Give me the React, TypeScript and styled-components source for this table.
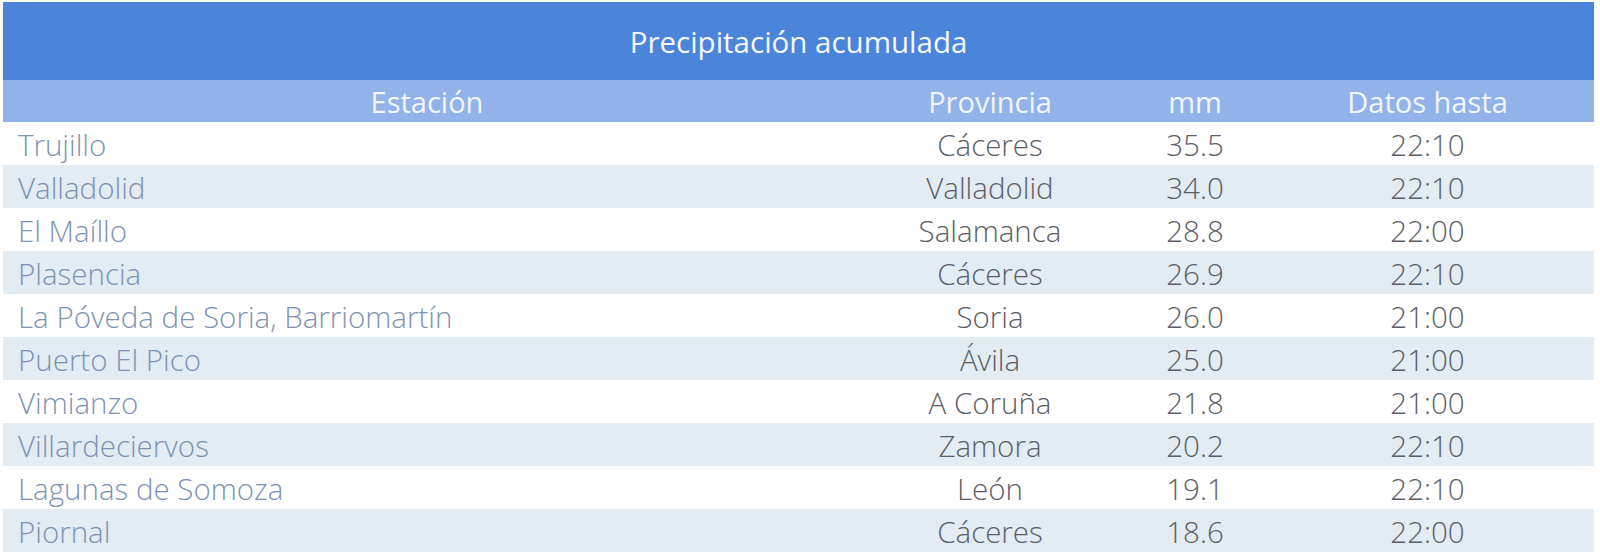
import React from "react";
import styled, { createGlobalStyle } from "styled-components";

const Global = createGlobalStyle`
  html, body { margin: 0; padding: 0; background: #ffffff; }
  body { font-family: "Open Sans", "Liberation Sans", sans-serif; }
`;

const Page = styled.div`
  padding: 2px 6px 0 3px;
`;

const Table = styled.table`
  width: 1591px;
  border-collapse: collapse;
  table-layout: fixed;
  font-family: "Open Sans", "Liberation Sans", sans-serif;
`;

const TitleCell = styled.th`
  background: #4b84d9;
  color: #f4f8fd;
  height: 78px;
  padding: 0;
  font-size: 29.5px;
  font-weight: 400;
  text-align: center;
  vertical-align: middle;
`;

const HeadRow = styled.tr`
  background: #91b3e9;
`;

const HeadCell = styled.th`
  color: #f1f5fc;
  height: 42px;
  padding: 0;
  font-size: 29px;
  font-weight: 400;
  text-align: center;
  vertical-align: middle;
  line-height: 1;
`;

const Row = styled.tr<{ $alt: boolean }>`
  background: ${(p) => (p.$alt ? "#e3ebf3" : "#ffffff")};
`;

const Cell = styled.td<{ $station?: boolean }>`
  height: 43px;
  box-sizing: border-box;
  padding: 3px 0 0 ${(p) => (p.$station ? "15px" : "0")};
  font-size: 29.5px;
  font-weight: 300;
  color: ${(p) => (p.$station ? "#7e93b3" : "#5c6066")};
  text-align: ${(p) => (p.$station ? "left" : "center")};
  vertical-align: middle;
  white-space: nowrap;
  line-height: 1;
`;

const rows = [
  ["Trujillo", "Cáceres", "35.5", "22:10"],
  ["Valladolid", "Valladolid", "34.0", "22:10"],
  ["El Maíllo", "Salamanca", "28.8", "22:00"],
  ["Plasencia", "Cáceres", "26.9", "22:10"],
  ["La Póveda de Soria, Barriomartín", "Soria", "26.0", "21:00"],
  ["Puerto El Pico", "Ávila", "25.0", "21:00"],
  ["Vimianzo", "A Coruña", "21.8", "21:00"],
  ["Villardeciervos", "Zamora", "20.2", "22:10"],
  ["Lagunas de Somoza", "León", "19.1", "22:10"],
  ["Piornal", "Cáceres", "18.6", "22:00"],
];

export default function App() {
  return (
    <Page>
      <Global />
      <Table>
        <colgroup>
          <col style={{ width: 848 }} />
          <col style={{ width: 278 }} />
          <col style={{ width: 132 }} />
          <col style={{ width: 333 }} />
        </colgroup>
        <thead>
          <tr>
            <TitleCell colSpan={4}>Precipitación acumulada</TitleCell>
          </tr>
          <HeadRow>
            <HeadCell>Estación</HeadCell>
            <HeadCell>Provincia</HeadCell>
            <HeadCell>mm</HeadCell>
            <HeadCell>Datos hasta</HeadCell>
          </HeadRow>
        </thead>
        <tbody>
          {rows.map((r, i) => (
            <Row key={i} $alt={i % 2 === 1}>
              <Cell $station>{r[0]}</Cell>
              <Cell>{r[1]}</Cell>
              <Cell>{r[2]}</Cell>
              <Cell>{r[3]}</Cell>
            </Row>
          ))}
        </tbody>
      </Table>
    </Page>
  );
}
